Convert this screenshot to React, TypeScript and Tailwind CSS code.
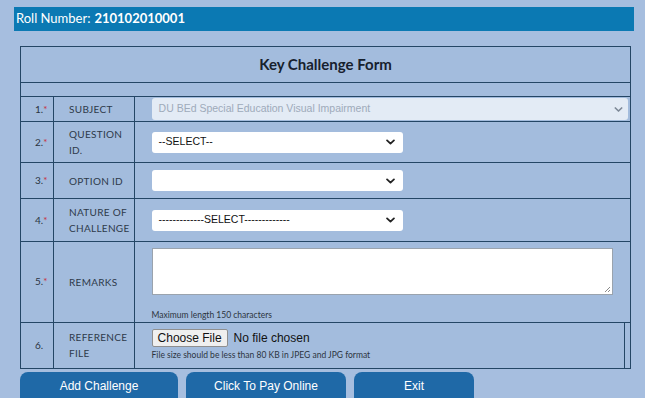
import React from "react";

const Chevron = ({ className }: { className?: string }) => (
  <svg viewBox="0 0 10 6" className={className} fill="none" stroke="currentColor" strokeWidth={2} strokeLinecap="round" strokeLinejoin="round">
    <path d="M1.2 1.2L5 4.8l3.8-3.6" />
  </svg>
);

const cell = "border border-[#244665] align-middle";

function Num({ n, req = true }: { n: string; req?: boolean }) {
  return (
    <td className={`${cell} pl-[14px] text-[10px] text-[#2a3442]`}>
      {n}
      {req && <span className="text-[#c8323c]">*</span>}
    </td>
  );
}

function Label({ children }: { children: React.ReactNode }) {
  return (
    <td className={`${cell} pl-[15px] pr-1 text-[10px] leading-[16px] tracking-[0.3px] text-[#2e3a4a] uppercase`}>
      {children}
    </td>
  );
}

function Select({ text }: { text: string }) {
  return (
    <div className="flex h-[21px] w-[251px] items-center justify-between rounded-[3px] bg-white pl-[7px] pr-[8px] font-['Liberation_Sans',Arial,sans-serif] text-[10.5px] text-[#111]">
      <span>{text}</span>
      <Chevron className="h-[6px] w-[9px] text-[#222]" />
    </div>
  );
}

export default function App() {
  return (
    <div className="h-[398px] w-[645px] overflow-hidden bg-[#a6bedf] pt-[7px] font-['Lato','Open_Sans',sans-serif]">
      <div className="ml-[14px] flex h-[24px] w-[620px] items-center bg-[#0b79b3] pl-[2px] text-[13px] text-white">
        Roll Number: <span className="ml-1 font-bold">210102010001</span>
      </div>

      <table className="ml-[20px] mt-[15px] w-[611px] border-collapse border border-[#244665] bg-[#a3bcdd]">
        <colgroup>
          <col className="w-[33px]" />
          <col className="w-[79px]" />
          <col />
        </colgroup>
        <tbody>
          <tr className="h-[36px]">
            <td colSpan={3} className={`${cell} text-center text-[15px] font-bold text-[#17212e]`}>
              Key Challenge Form
            </td>
          </tr>
          <tr className="h-[14px]">
            <td colSpan={3} className={cell}></td>
          </tr>
          <tr className="h-[25px]">
            <Num n="1." />
            <Label>Subject</Label>
            <td className={`${cell} pl-[17px] pr-[2px]`}>
              <div className="flex h-[22px] items-center justify-between rounded-[3px] bg-[#e3ebf5] pl-[7px] pr-[5px] font-['Liberation_Sans',Arial,sans-serif] text-[10.5px] text-[#9eaaba]">
                <span>DU BEd Special Education Visual Impairment</span>
                <Chevron className="h-[5px] w-[9px] text-[#7d8896]" />
              </div>
            </td>
          </tr>
          <tr className="h-[41px]">
            <Num n="2." />
            <Label>
              Question
              <br />
              ID.
            </Label>
            <td className={`${cell} pl-[17px]`}>
              <Select text="--SELECT--" />
            </td>
          </tr>
          <tr className="h-[36px]">
            <Num n="3." />
            <Label>Option ID</Label>
            <td className={`${cell} pl-[17px]`}>
              <Select text="" />
            </td>
          </tr>
          <tr className="h-[43px]">
            <Num n="4." />
            <Label>
              Nature of
              <br />
              Challenge
            </Label>
            <td className={`${cell} pl-[17px]`}>
              <Select text="-------------SELECT-------------" />
            </td>
          </tr>
          <tr className="h-[78px]">
            <Num n="5." />
            <Label>Remarks</Label>
            <td className={`${cell} pl-[17px] pt-[6px] align-top`}>
              <div className="relative h-[47px] w-[461px] border border-[#9aa3ad] bg-white">
                <svg viewBox="0 0 8 8" className="absolute bottom-[1px] right-[1px] h-[8px] w-[8px] text-[#8a8a8a]" stroke="currentColor" strokeWidth={1}>
                  <path d="M7 2L2 7M7 5L5 7" />
                </svg>
              </div>
              <div className="mt-[14px] text-[8.5px] text-[#2c3440]">Maximum length 150 characters</div>
            </td>
          </tr>
          <tr className="h-[46px]">
            <Num n="6." req={false} />
            <Label>
              Reference
              <br />
              File
            </Label>
            <td className={`${cell} relative pl-[17px]`}>
              <div className="flex items-center gap-[6px] font-['Liberation_Sans',Arial,sans-serif] text-[12px] text-[#111]">
                <span className="flex h-[18px] items-center rounded-[2px] border border-[#8f8f8f] bg-[#efefef] px-[5px]">Choose File</span>
                <span>No file chosen</span>
              </div>
              <div className="mt-[2px] text-[8.5px] text-[#2c3440]">File size should be less than 80 KB in JPEG and JPG format</div>
              <div className="absolute bottom-0 right-[5px] top-0 w-px bg-[#244665]" />
            </td>
          </tr>
        </tbody>
      </table>

      <div className="ml-[20px] mt-[3px] flex gap-[8px] font-['Liberation_Sans',Arial,sans-serif] text-[12px] text-white">
        <div className="flex h-[34px] w-[158px] items-start justify-center rounded-[8px] bg-[#1f69a7] pt-[5px]">Add Challenge</div>
        <div className="flex h-[34px] w-[160px] items-start justify-center rounded-[8px] bg-[#1f69a7] pt-[5px]">Click To Pay Online</div>
        <div className="flex h-[34px] w-[120px] items-start justify-center rounded-[8px] bg-[#1f69a7] pt-[5px]">Exit</div>
      </div>
    </div>
  );
}
